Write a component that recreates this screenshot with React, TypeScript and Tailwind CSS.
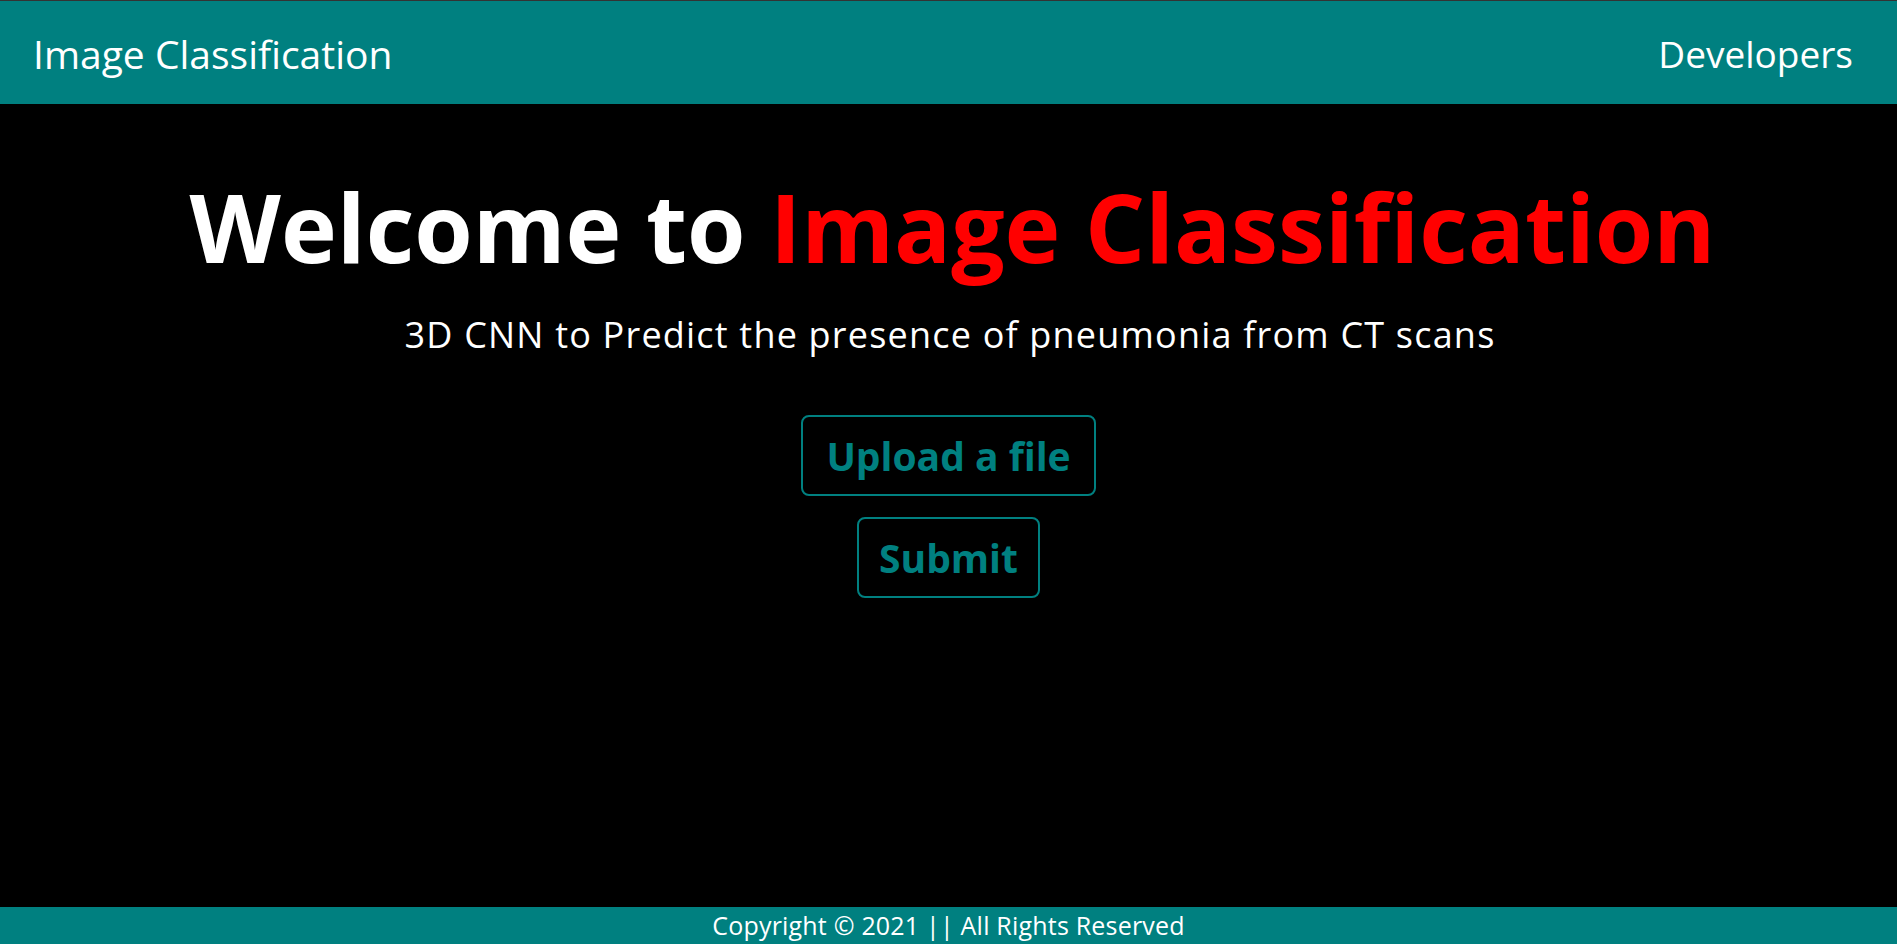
import React from "react";

const font = { fontFamily: '"Comic Sans MS", "Open Sans", "DejaVu Sans", sans-serif' };

export default function App() {
  return (
    <div
      className="h-[944px] w-full bg-black flex flex-col border-t border-[#333333] overflow-hidden"
      style={font}
    >
      <header className="h-[103px] shrink-0 bg-[#008080] flex items-center justify-between pl-[33px] pr-[44px] pt-[2px]">
        <div className="text-white text-[39px] leading-none">Image Classification</div>
        <div className="text-white text-[37px] leading-none">Developers</div>
      </header>

      <main className="flex-1 flex flex-col items-center">
        <h1 className="mt-[76px] pl-[8px] text-[94.5px] leading-none font-bold text-white whitespace-nowrap">
          Welcome to <span className="text-[#ff0000]">Image Classification</span>
        </h1>
        <p className="mt-[42px] pl-[3px] text-[36px] tracking-[1.2px] leading-none text-white whitespace-nowrap">
          3D CNN to Predict the presence of pneumonia from CT scans
        </p>
        <div className="mt-[62px] flex flex-col items-center gap-[21px]">
          <label className="w-[295px] h-[81px] flex items-center justify-center border-2 border-[#008080] rounded-[8px] text-[#008080] text-[39px] font-bold leading-none cursor-pointer">
            Upload a file
          </label>
          <button className="w-[183px] h-[81px] flex items-center justify-center border-2 border-[#008080] rounded-[8px] text-[#008080] text-[39px] font-bold leading-none">
            Submit
          </button>
        </div>
      </main>

      <footer className="h-[37px] shrink-0 bg-[#008080] flex items-center justify-center">
        <span className="text-white text-[25px] tracking-[0.2px] leading-none">Copyright © 2021 || All Rights Reserved</span>
      </footer>
    </div>
  );
}
